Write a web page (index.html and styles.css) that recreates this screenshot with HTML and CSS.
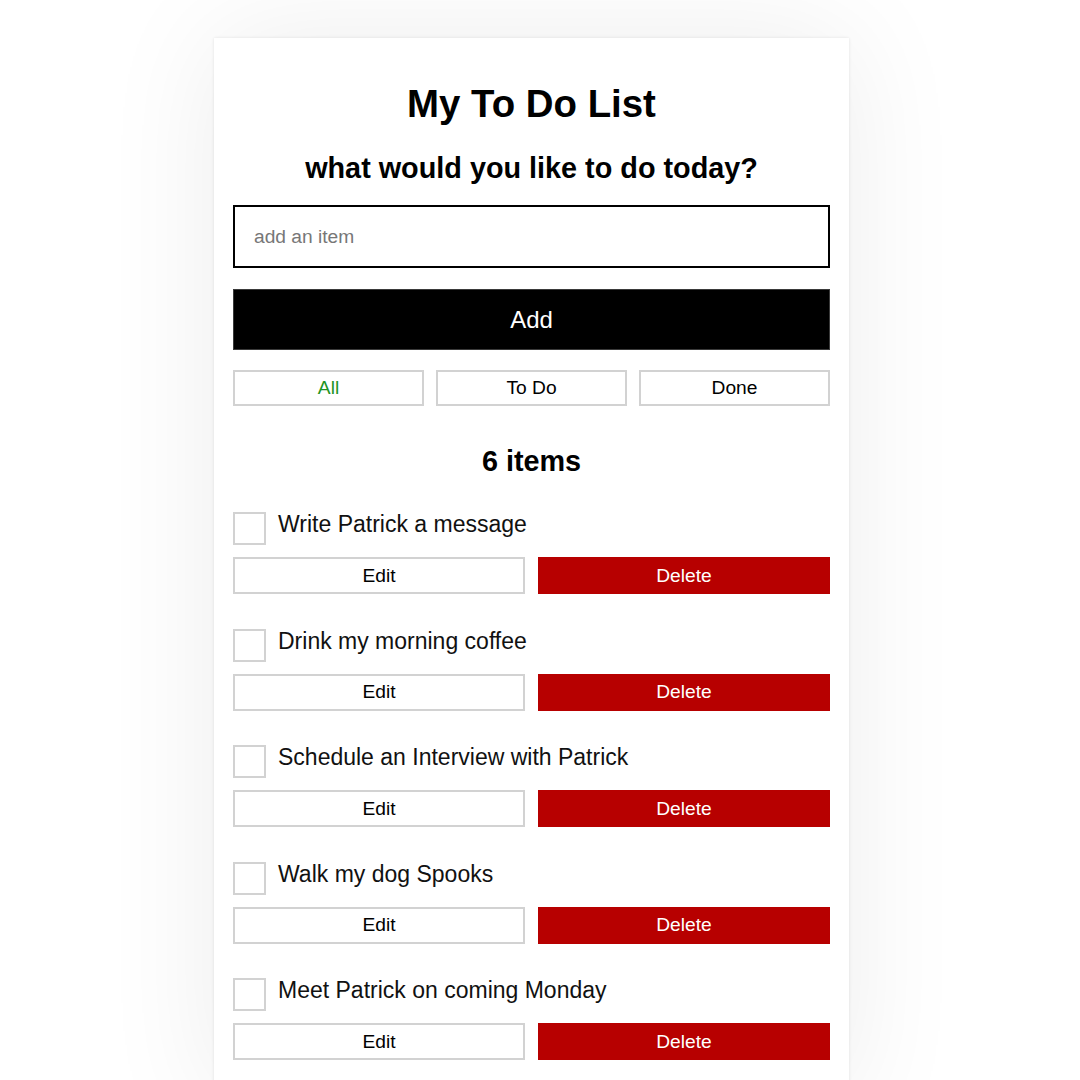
FILE: index.html
```html
<!DOCTYPE html>
<html lang="en">
<head>
<meta charset="utf-8">
<title>My To Do List</title>
<link rel="stylesheet" href="styles.css">
</head>
<body>
<div class="page">
  <main class="card">
    <h1 class="title">My To Do List</h1>
    <h2 class="subtitle">what would you like to do today?</h2>
    <input class="new-item" type="text" placeholder="add an item">
    <button class="add-btn" type="button">Add</button>
    <div class="filters">
      <button class="filter active" type="button">All</button>
      <button class="filter" type="button">To Do</button>
      <button class="filter" type="button">Done</button>
    </div>
    <h2 class="count">6 items</h2>
    <ul class="list">
      <li class="item">
        <label class="item-row"><input class="check" type="checkbox"><span class="item-text">Write Patrick a message</span></label>
        <div class="actions"><button class="btn edit" type="button">Edit</button><button class="btn delete" type="button">Delete</button></div>
      </li>
      <li class="item">
        <label class="item-row"><input class="check" type="checkbox"><span class="item-text">Drink my morning coffee</span></label>
        <div class="actions"><button class="btn edit" type="button">Edit</button><button class="btn delete" type="button">Delete</button></div>
      </li>
      <li class="item">
        <label class="item-row"><input class="check" type="checkbox"><span class="item-text">Schedule an Interview with Patrick</span></label>
        <div class="actions"><button class="btn edit" type="button">Edit</button><button class="btn delete" type="button">Delete</button></div>
      </li>
      <li class="item">
        <label class="item-row"><input class="check" type="checkbox"><span class="item-text">Walk my dog Spooks</span></label>
        <div class="actions"><button class="btn edit" type="button">Edit</button><button class="btn delete" type="button">Delete</button></div>
      </li>
      <li class="item">
        <label class="item-row"><input class="check" type="checkbox"><span class="item-text">Meet Patrick on coming Monday</span></label>
        <div class="actions"><button class="btn edit" type="button">Edit</button><button class="btn delete" type="button">Delete</button></div>
      </li>
    </ul>
  </main>
</div>
</body>
</html>
```

FILE: styles.css
```css
html, body {
  margin: 0;
  padding: 0;
  background: #ffffff;
  overflow: hidden;
}

body {
  font-family: "Liberation Sans", Arial, sans-serif;
  color: #000;
}

.page {
  padding: 38px 17px 0 0;
}

.card {
  width: 635px;
  box-sizing: border-box;
  margin: 0 auto;
  padding: 44px 19px 40px;
  background: #fff;
  box-shadow: 0 0 3px rgba(0, 0, 0, 0.10), 0 0 110px rgba(0, 0, 0, 0.075);
  display: flex;
  flex-direction: column;
}

.title {
  margin: 0;
  font-size: 38.4px;
  line-height: 44px;
  font-weight: bold;
  text-align: center;
}

.subtitle {
  margin: 26px 0 0;
  font-size: 28.8px;
  line-height: 32px;
  font-weight: bold;
  text-align: center;
}

.new-item {
  margin: 21px 0 0;
  height: 63px;
  box-sizing: border-box;
  border: 2px solid #000;
  padding: 0 19px;
  font-family: inherit;
  font-size: 19.2px;
  color: #000;
  background: #fff;
  outline: none;
}

.new-item::placeholder {
  color: #777;
}

.add-btn {
  margin: 21px 0 0;
  height: 61px;
  box-sizing: border-box;
  border: 1px solid #3a3a3a;
  background: #000;
  color: #fff;
  font-family: inherit;
  font-size: 24px;
  padding: 0;
}

.filters {
  margin-top: 20px;
  display: grid;
  grid-template-columns: 1fr 1fr 1fr;
  column-gap: 12px;
}

.filter {
  height: 36px;
  box-sizing: border-box;
  border: 2px solid #d2d2d2;
  background: #fff;
  color: #000;
  font-family: inherit;
  font-size: 19.2px;
  padding: 0;
}

.filter.active {
  color: #1f9424;
}

.count {
  margin: 39px 0 0;
  font-size: 28.8px;
  line-height: 32px;
  font-weight: bold;
  text-align: center;
}

.list {
  list-style: none;
  margin: 35px 0 0;
  padding: 0;
  display: flex;
  flex-direction: column;
  gap: 34.6px;
}

.item {
  display: flex;
  flex-direction: column;
  gap: 12px;
}

.item-row {
  display: flex;
  align-items: flex-start;
  gap: 12px;
}

.check {
  appearance: none;
  -webkit-appearance: none;
  margin: 0;
  width: 33px;
  height: 33px;
  box-sizing: border-box;
  border: 2px solid #d2d2d2;
  background: #fff;
  flex: none;
}

.item-text {
  font-size: 23px;
  line-height: 24px;
  color: #111;
}

.actions {
  display: grid;
  grid-template-columns: 1fr 1fr;
  column-gap: 13px;
}

.btn {
  height: 37px;
  box-sizing: border-box;
  font-family: inherit;
  font-size: 19.2px;
  padding: 0;
}

.edit {
  border: 2px solid #d2d2d2;
  background: #fff;
  color: #000;
}

.delete {
  border: 2px solid #b70000;
  background: #b70000;
  color: #fff;
}
```
